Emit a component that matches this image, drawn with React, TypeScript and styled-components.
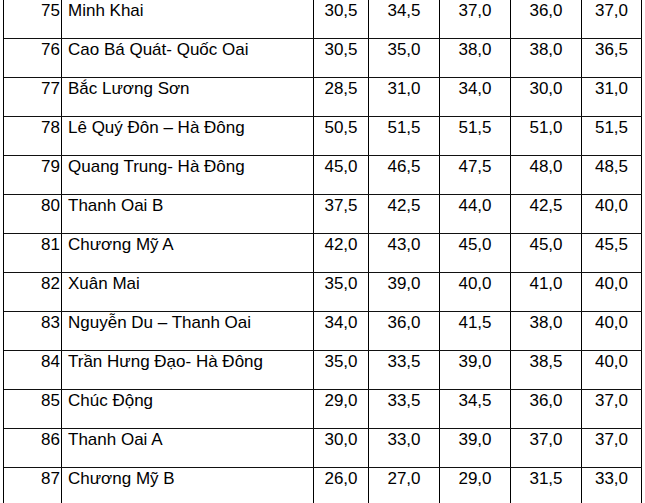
import React from 'react';
import styled, { createGlobalStyle } from 'styled-components';

const GlobalStyle = createGlobalStyle`
  html, body {
    margin: 0;
    padding: 0;
    background: #ffffff;
  }
  body {
    font-family: "Liberation Sans", Arial, sans-serif;
    color: #000000;
  }
`;

const Sheet = styled.div`
  width: 645px;
  height: 503px;
  overflow: hidden;
  background: #ffffff;
`;

const Table = styled.div`
  margin-left: 3px;
  width: 638px;
  border-left: 1px solid #000000;
`;

const Row = styled.div`
  display: grid;
  grid-template-columns: 58px 252px 55px 71px 71px 71px 60px;
  height: 39px;
  box-sizing: border-box;
  border-bottom: 1px solid #111111;
`;

const Cell = styled.div<{ $align?: 'left' | 'right' | 'center' }>`
  box-sizing: border-box;
  border-right: 1px solid #000000;
  padding: 1px ${({ $align }) => ($align === 'right' ? '1px' : '0')} 0
    ${({ $align }) => ($align === 'left' ? '6px' : '0')};
  font-size: 17px;
  line-height: 19px;
  text-align: ${({ $align }) => $align ?? 'center'};
  white-space: nowrap;
  overflow: hidden;
`;

type School = {
  no: number;
  name: string;
  scores: string[];
};

const schools: School[] = [
  { no: 75, name: 'Minh Khai', scores: ['30,5', '34,5', '37,0', '36,0', '37,0'] },
  { no: 76, name: 'Cao Bá Quát- Quốc Oai', scores: ['30,5', '35,0', '38,0', '38,0', '36,5'] },
  { no: 77, name: 'Bắc Lương Sơn', scores: ['28,5', '31,0', '34,0', '30,0', '31,0'] },
  { no: 78, name: 'Lê Quý Đôn – Hà Đông', scores: ['50,5', '51,5', '51,5', '51,0', '51,5'] },
  { no: 79, name: 'Quang Trung- Hà Đông', scores: ['45,0', '46,5', '47,5', '48,0', '48,5'] },
  { no: 80, name: 'Thanh Oai B', scores: ['37,5', '42,5', '44,0', '42,5', '40,0'] },
  { no: 81, name: 'Chương Mỹ A', scores: ['42,0', '43,0', '45,0', '45,0', '45,5'] },
  { no: 82, name: 'Xuân Mai', scores: ['35,0', '39,0', '40,0', '41,0', '40,0'] },
  { no: 83, name: 'Nguyễn Du – Thanh Oai', scores: ['34,0', '36,0', '41,5', '38,0', '40,0'] },
  { no: 84, name: 'Trần Hưng Đạo- Hà Đông', scores: ['35,0', '33,5', '39,0', '38,5', '40,0'] },
  { no: 85, name: 'Chúc Động', scores: ['29,0', '33,5', '34,5', '36,0', '37,0'] },
  { no: 86, name: 'Thanh Oai A', scores: ['30,0', '33,0', '39,0', '37,0', '37,0'] },
  { no: 87, name: 'Chương Mỹ B', scores: ['26,0', '27,0', '29,0', '31,5', '33,0'] },
];

const App: React.FC = () => {
  return (
    <>
      <GlobalStyle />
      <Sheet>
        <Table>
          {schools.map((s) => (
            <Row key={s.no}>
              <Cell $align="right">{s.no}</Cell>
              <Cell $align="left">{s.name}</Cell>
              {s.scores.map((score, i) => (
                <Cell key={i}>{score}</Cell>
              ))}
            </Row>
          ))}
        </Table>
      </Sheet>
    </>
  );
};

export default App;
